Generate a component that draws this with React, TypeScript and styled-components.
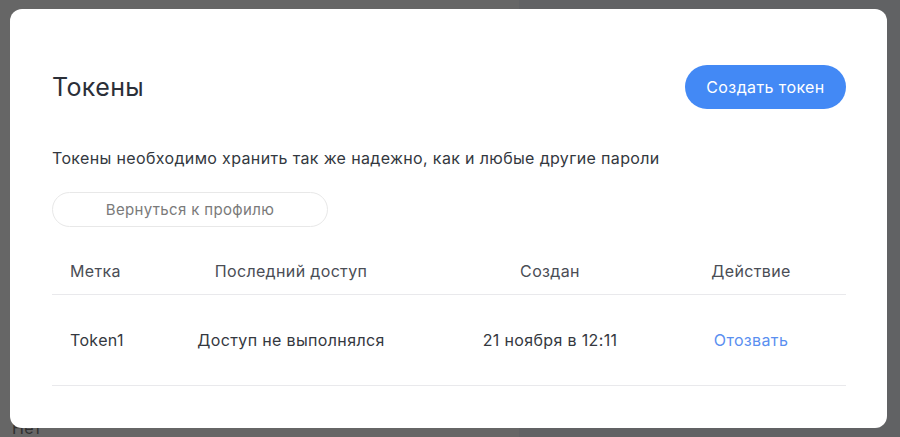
import React from "react";
import styled, { createGlobalStyle } from "styled-components";

const Global = createGlobalStyle`
  html, body { margin: 0; padding: 0; }
  body {
    width: 900px;
    height: 437px;
    overflow: hidden;
    font-family: Inter, "Noto Sans", "Liberation Sans", sans-serif;
    letter-spacing: 0.35px;
  }
  * { box-sizing: border-box; }
`;

const Page = styled.div`
  display: flex;
  width: 900px;
  height: 437px;
`;

const LeftPane = styled.div`
  width: 519px;
  background: #ffffff;
  padding: 418px 0 0 12px;
  font-size: 16px;
  color: #777;
`;

const RightPane = styled.div`
  flex: 1;
  background: #f3f5fa;
`;

const Overlay = styled.div`
  position: fixed;
  inset: 0;
  background: rgba(0, 0, 0, 0.6);
`;

const Modal = styled.div`
  position: fixed;
  top: 9px;
  left: 10px;
  width: 877px;
  height: 419px;
  background: #ffffff;
  border-radius: 12px;
  padding: 56px 41px 0 42px;
  display: flex;
  flex-direction: column;
`;

const Header = styled.div`
  display: flex;
  align-items: center;
  justify-content: space-between;
  height: 44px;
`;

const Title = styled.h2`
  margin: 0;
  font-size: 25px;
  font-weight: 400;
  color: #2b2f38;
`;

const PrimaryButton = styled.button`
  height: 44px;
  width: 161px;
  border: none;
  border-radius: 22px;
  background: #4389f5;
  color: #ffffff;
  font-family: inherit;
  letter-spacing: 0.4px;
  font-size: 16px;
  cursor: pointer;
`;

const Description = styled.p`
  margin: 37px 0 0;
  font-size: 16px;
  line-height: 24px;
  color: #333840;
`;

const BackButton = styled.button`
  margin-top: 22px;
  width: 276px;
  height: 35px;
  border: 1px solid #e8e8e8;
  border-radius: 18px;
  background: #ffffff;
  color: #7a7a7a;
  font-family: inherit;
  letter-spacing: 0.35px;
  font-size: 15px;
  cursor: pointer;
`;

const Table = styled.div`
  margin-top: 20px;
  display: flex;
  flex-direction: column;
`;

const Row = styled.div<{ $height: number; $head?: boolean }>`
  display: grid;
  grid-template-columns: 86px 306px 212px 190px;
  align-items: center;
  height: ${(p) => p.$height}px;
  border-bottom: 1px solid #e9e9ec;
  color: ${(p) => (p.$head ? "#4a4d55" : "#343840")};
  font-size: 16px;
`;

const Cell = styled.div<{ $first?: boolean; $link?: boolean }>`
  text-align: ${(p) => (p.$first ? "left" : "center")};
  padding-left: ${(p) => (p.$first ? "18px" : "0")};
  color: ${(p) => (p.$link ? "#5a8ff0" : "inherit")};
  white-space: nowrap;
`;

export default function App() {
  return (
    <>
      <Global />
      <Page>
        <LeftPane>Нет</LeftPane>
        <RightPane />
      </Page>
      <Overlay />
      <Modal>
        <Header>
          <Title>Токены</Title>
          <PrimaryButton>Создать токен</PrimaryButton>
        </Header>
        <Description>
          Токены необходимо хранить так же надежно, как и любые другие пароли
        </Description>
        <BackButton>Вернуться к профилю</BackButton>
        <Table>
          <Row $height={48} $head>
            <Cell $first>Метка</Cell>
            <Cell>Последний доступ</Cell>
            <Cell>Создан</Cell>
            <Cell>Действие</Cell>
          </Row>
          <Row $height={91}>
            <Cell $first>Token1</Cell>
            <Cell>Доступ не выполнялся</Cell>
            <Cell>21 ноября в 12:11</Cell>
            <Cell $link>Отозвать</Cell>
          </Row>
        </Table>
      </Modal>
    </>
  );
}
